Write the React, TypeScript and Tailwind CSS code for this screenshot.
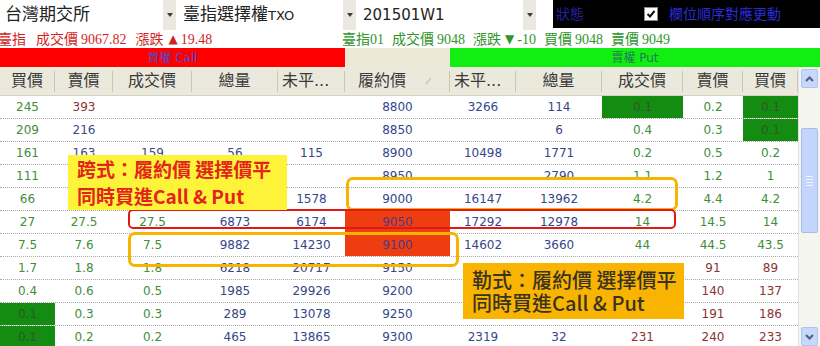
import React from 'react';

const GRID = 'grid grid-cols-[55px_58px_79px_86px_67px_105px_66px_86px_81px_60px_55px]';

// cells covered by the pasted annotation boxes are left empty
const ROWS: string[][] = [
  ['245', '393', '', '', '', '8800', '3266', '114', '0.1', '0.2', '0.1'],
  ['209', '216', '', '', '', '8850', '', '6', '0.4', '0.3', '0.1'],
  ['161', '163', '159', '56', '115', '8900', '10498', '1771', '0.2', '0.5', '0.2'],
  ['111', '', '', '', '', '8950', '', '2790', '1.1', '1.2', '1'],
  ['66', '', '', '', '1578', '9000', '16147', '13962', '4.2', '4.4', '4.2'],
  ['27', '27.5', '27.5', '6873', '6174', '9050', '17292', '12978', '14', '14.5', '14'],
  ['7.5', '7.6', '7.5', '9882', '14230', '9100', '14602', '3660', '44', '44.5', '43.5'],
  ['1.7', '1.8', '1.8', '6218', '20717', '9150', '', '', '', '91', '89'],
  ['0.4', '0.6', '0.5', '1985', '29926', '9200', '', '', '', '140', '137'],
  ['0.1', '0.3', '0.3', '289', '13078', '9250', '1556', '76', '188', '191', '186'],
  ['0.1', '0.2', '0.2', '465', '13865', '9300', '2319', '32', '231', '240', '233'],
];

const GREEN_BG = ['0-8', '0-10', '1-10', '9-0', '10-0'];
const STRIKE_BG = ['5-5', '6-5'];

function cellClass(r: number, c: number) {
  const key = `${r}-${c}`;
  if (GREEN_BG.includes(key)) return 'bg-[#148c12] text-[#2b5a22]';
  if (STRIKE_BG.includes(key)) return 'bg-[#ef3d12] text-[#4b3a86]';
  if (key === '0-1') return 'text-[#8a3636]';
  if (key === '1-1' || key === '2-1' || key === '2-2') return 'text-[#3b4a86]';
  if (c <= 2) return 'text-[#3f8e3a]';
  if (c <= 7) return 'text-[#35468a]';
  return r <= 6 ? 'text-[#3f8e3a]' : 'text-[#8a3434]';
}

const Arrow = () => (
  <svg width="6" height="4" viewBox="0 0 6 4">
    <path d="M0 0h6L3 4z" fill="#3a3a3a" />
  </svg>
);

function Dropdown({ w, children }: { w: string; children: React.ReactNode }) {
  return (
    <div className={`${w} h-full flex items-center bg-white`}>
      <div className="flex-1 pl-[5px] text-[17px] text-[#222] whitespace-nowrap">{children}</div>
      <div className="w-[13px] h-full bg-[#eae8e1] flex items-center justify-center">
        <Arrow />
      </div>
    </div>
  );
}

function HeadCell({ label, left, sort }: { label: string; left?: boolean; sort?: boolean }) {
  return (
    <div className="flex items-center h-full">
      {sort ? (
        <div className="flex-1 flex items-center pl-[13px]">
          <span>{label}</span>
          <svg className="ml-[19px]" width="8" height="8" viewBox="0 0 8 8">
            <path d="M1 7L6 1" stroke="#c9c6ba" strokeWidth="1.5" />
          </svg>
        </div>
      ) : (
        <span className={`flex-1 ${left ? 'pl-[4px] text-left' : 'text-center'}`}>{label}</span>
      )}
      <span className="w-px h-[21px] bg-[#c9c6b8]" />
    </div>
  );
}

const HEAD = ['買價', '賣價', '成交價', '總量', '未平...', '履約價', '未平...', '總量', '成交價', '賣價', '買價'];

const Chevron = ({ up }: { up?: boolean }) => (
  <svg width="9" height="6" viewBox="0 0 9 6">
    <path d={up ? 'M1 5L4.5 1.5L8 5' : 'M1 1L4.5 4.5L8 1'} stroke="#4c5f86" strokeWidth="2" fill="none" />
  </svg>
);

export default function App() {
  return (
    <div className="relative w-[820px] h-[346px] overflow-hidden bg-white font-['DejaVu_Sans','Noto_Sans_CJK_TC',sans-serif]">
      {/* top selectors */}
      <div className="flex h-[30px]">
        <Dropdown w="w-[176px]">台灣期交所</Dropdown>
        <div className="w-[2px]" />
        <Dropdown w="w-[178px]">
          臺指選擇權<span className="text-[13px]">TXO</span>
        </Dropdown>
        <div className="w-[2px]" />
        <Dropdown w="w-[178px]">
          <span className="text-[15px]">201501W1</span>
        </Dropdown>
        <div className="w-[17px]" />
        <div className="flex-1 h-[28px] bg-black flex items-center text-[14px]">
          <span className="ml-[3px] text-[#2323a8]">狀態</span>
          <span className="ml-[60px] w-[14px] h-[14px] bg-white border border-[#8a8a8a] flex items-center justify-center">
            <svg width="10" height="10" viewBox="0 0 10 10">
              <path d="M1.5 5L4 7.5L8.5 2" stroke="#111" strokeWidth="2" fill="none" />
            </svg>
          </span>
          <span className="ml-[11px] text-[#2a2ad8]">欄位順序對應更動</span>
        </div>
      </div>

      {/* quote line */}
      <div className="flex h-[18px] items-center text-[14px] whitespace-nowrap">
        <div className="w-[344px] flex items-center text-[#d21f1f] -ml-[2px]">
          <span>臺指</span>
          <span className="ml-[10px]">成交價</span>
          <span className="ml-[3px] font-['Liberation_Serif',serif]">9067.82</span>
          <span className="ml-[9px]">漲跌</span>
          <span className="ml-[5px] text-[12px]">▲</span>
          <span className="ml-[3px] font-['Liberation_Serif',serif]">19.48</span>
        </div>
        <div className="flex items-center text-[#2f952c]">
          <span>臺指<span className="font-['Liberation_Serif',serif]">01</span></span>
          <span className="ml-[8px]">成交價</span>
          <span className="ml-[3px] font-['Liberation_Serif',serif]">9048</span>
          <span className="ml-[8px]">漲跌</span>
          <span className="ml-[4px] text-[12px]">▼</span>
          <span className="ml-[3px] font-['Liberation_Serif',serif]">-10</span>
          <span className="ml-[8px]">買價</span>
          <span className="ml-[3px] font-['Liberation_Serif',serif]">9048</span>
          <span className="ml-[8px]">賣價</span>
          <span className="ml-[3px] font-['Liberation_Serif',serif]">9049</span>
        </div>
      </div>

      {/* call / put band */}
      <div className="flex h-[19px] text-[12px]">
        <div className="w-[345px] bg-[#ff0000] text-[#4b4bd2] flex items-center justify-center">買權 Call</div>
        <div className="w-[105px] bg-[#ece9d8]" />
        <div className="flex-1 bg-[#12ee12] text-[#23795a] flex items-center justify-center">賣權 Put</div>
      </div>

      {/* table */}
      <div className="flex">
        <div className="w-[798px]">
          <div className={`${GRID} h-[29px] bg-[#ebe8dc] border-b border-[#d6d3c6] text-[16px] text-[#3a3a3a]`}>
            {HEAD.map((h, i) => (
              <HeadCell key={i} label={h} left={i === 4 || i === 6} sort={i === 5} />
            ))}
          </div>
          {ROWS.map((row, r) => (
            <div key={r} className={`${GRID} h-[23px] border-b border-dotted border-[#aaaaaa] text-[12px]`}>
              {row.map((v, c) => (
                <div key={c} className={`flex items-center justify-center ${cellClass(r, c)}`}>{v}</div>
              ))}
            </div>
          ))}
        </div>

        {/* scrollbar */}
        <div className="w-[22px] h-[279px] flex flex-col bg-[#f5f5f0] border-l border-[#e2e2da]">
          <div className="h-[2px]" />
          <div className="mx-[2px] h-[19px] rounded-[2px] bg-[#c8d8fb] border border-[#b1c4ec] flex items-center justify-center">
            <Chevron up />
          </div>
          <div className="h-[40px]" />
          <div className="mx-[2px] h-[105px] rounded-[2px] bg-[#c4d5fb] border border-[#a8bde8] flex flex-col items-center justify-center gap-[2px]">
            <span className="w-[7px] h-px bg-[#eef3ff]" />
            <span className="w-[7px] h-px bg-[#eef3ff]" />
            <span className="w-[7px] h-px bg-[#eef3ff]" />
            <span className="w-[7px] h-px bg-[#eef3ff]" />
          </div>
          <div className="flex-1" />
          <div className="mx-[2px] h-[19px] rounded-[2px] bg-[#c8d8fb] border border-[#b1c4ec] flex items-center justify-center">
            <Chevron />
          </div>
        </div>
      </div>

      {/* annotations */}
      <div className="absolute left-[346px] top-[177px] w-[332px] h-[34px] border-[3px] border-[#f6b400] rounded-[7px]" />
      <div className="absolute left-[128px] top-[209px] w-[548px] h-[20px] border-[2.5px] border-[#e01818] rounded-[5px]" />
      <div className="absolute left-[128px] top-[232px] w-[331px] h-[35px] border-[3px] border-[#f6b400] rounded-[7px]" />

      <div className="absolute left-[68px] top-[155px] w-[219px] h-[55px] bg-[#fdf43a] pl-[9px] text-[19px] leading-[27px] font-bold text-[#e3231c] font-['Noto_Sans_CJK_TC',sans-serif] whitespace-nowrap">
        <div>跨式：履約價 選擇價平</div>
        <div>同時買進Call &amp; Put</div>
      </div>

      <div className="absolute left-[463px] top-[263px] w-[221px] h-[56px] bg-[#f8b400] pl-[9px] pt-[5px] text-[20px] leading-[23px] font-medium text-[#3a3320] font-['Noto_Sans_CJK_TC',sans-serif] whitespace-nowrap">
        <div>勒式：履約價 選擇價平</div>
        <div>同時買進Call &amp; Put</div>
      </div>
    </div>
  );
}
